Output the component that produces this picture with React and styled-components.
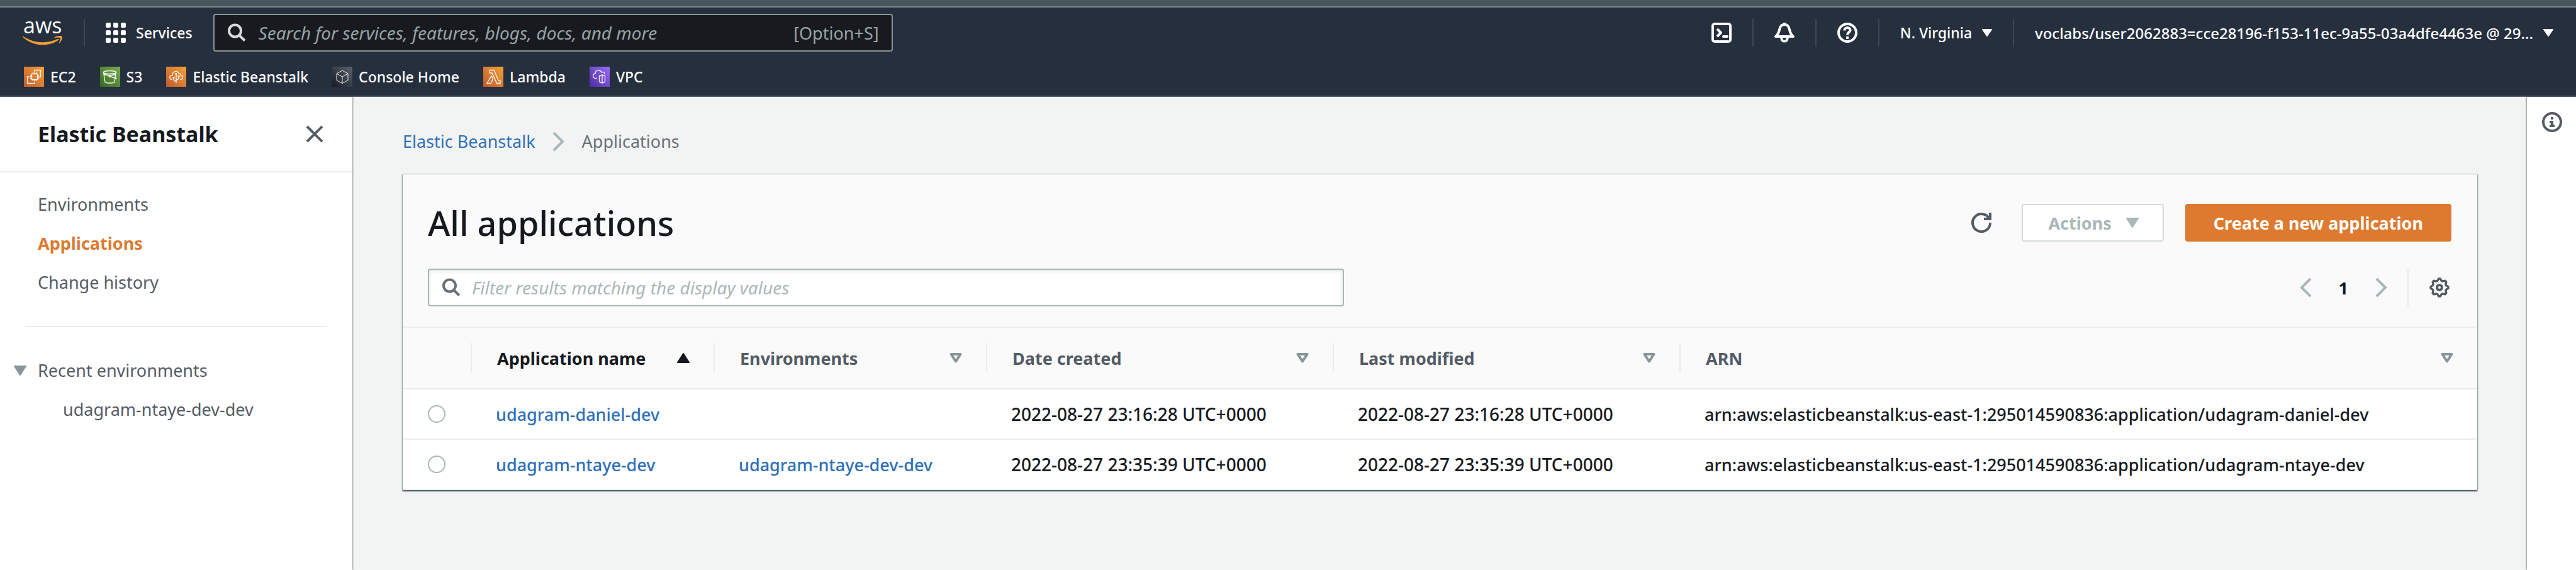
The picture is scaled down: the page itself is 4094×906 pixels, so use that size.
import React from "react";
import styled, { createGlobalStyle } from "styled-components";

const color = {
  navy: "#252f3e",
  navyLine: "#555f6b",
  ink: "#16191f",
  text: "#545b64",
  muted: "#687078",
  soft: "#879596",
  faint: "#aab7b8",
  line: "#eaeded",
  orange: "#dd7a30",
  blue: "#2e70b8",
  page: "#f2f4f4",
};

const GlobalStyle = createGlobalStyle`
  *, *::before, *::after { box-sizing: border-box; }
  body {
    margin: 0;
    background: ${color.page};
    color: ${color.ink};
    font-family: "Noto Sans", "Open Sans", sans-serif;
    font-size: 27px;
  }
  button, input { font: inherit; color: inherit; }
  button { background: none; border: 0; padding: 0; cursor: pointer; }
  a { text-decoration: none; color: inherit; }
  ul, ol { list-style: none; margin: 0; padding: 0; }
  svg { display: block; flex: none; }
`;

const Page = styled.div`
  min-height: 100vh;
  display: flex;
  flex-direction: column;
`;

const BrowserEdge = styled.div`
  height: 12px;
  background: #48565e;
  border-bottom: 2px solid #75838a;
`;

/* ---------- global navigation ---------- */

const GlobalNav = styled.header`
  background: ${color.navy};
  color: #fff;
  border-bottom: 2px solid ${color.navyLine};
  font-size: 23px;
  font-weight: 500;
`;

const NavBar = styled.div`
  display: flex;
  align-items: center;
  height: 80px;
  padding: 0 36px;
`;

const NavDivider = styled.span`
  flex: none;
  width: 2px;
  height: 44px;
  background: #414750;
`;

const LogoLink = styled.a`
  display: block;
  margin-right: 33px;
`;

const ServicesButton = styled.button`
  display: flex;
  align-items: center;
  gap: 16px;
  margin: 0 33px;
  font-weight: 500;
`;

const GlobalSearch = styled.label`
  display: flex;
  align-items: center;
  gap: 20px;
  flex: 0 1 1080px;
  height: 60px;
  padding: 0 20px;
  border: 2px solid ${color.soft};
  border-radius: 4px;
  background: #191a1f;
  color: #d5dbdb;
  font-size: 28px;
  font-weight: 400;
`;

const SearchInput = styled.input`
  flex: 1;
  min-width: 0;
  padding: 0;
  border: 0;
  outline: 0;
  background: transparent;
  &::placeholder {
    color: ${(p) => p.$hint};
    font-style: italic;
    opacity: 1;
  }
`;

const Shortcut = styled.span`
  color: #95a5a6;
  font-size: 27px;
`;

const NavTools = styled.div`
  display: flex;
  align-items: center;
  gap: 33px;
  margin-left: auto;
`;

const NavMenuButton = styled.button`
  display: flex;
  align-items: center;
  gap: 16px;
  font-weight: 500;
  font-size: ${(p) => (p.$account ? "24px" : "23px")};
  white-space: nowrap;
`;

const Favorites = styled.ul`
  display: flex;
  align-items: center;
  gap: 38px;
  height: 60px;
  padding: 0 38px;
`;

const FavoriteLink = styled.a`
  display: flex;
  align-items: center;
  gap: 10px;
  white-space: nowrap;
`;

/* ---------- page frame ---------- */

const Body = styled.div`
  flex: 1;
  display: flex;
`;

const Sidebar = styled.aside`
  flex: none;
  width: 560px;
  background: #fff;
  box-shadow: 1px 0 2px rgba(0, 28, 36, 0.45);
`;

const SidebarHeader = styled.div`
  display: flex;
  align-items: center;
  justify-content: space-between;
  height: 120px;
  padding: 0 46px 0 60px;
  border-bottom: 2px solid ${color.line};
`;

const SidebarTitle = styled.a`
  color: ${color.ink};
  font-size: 34px;
  font-weight: 700;
`;

const IconButton = styled.button`
  display: flex;
  color: ${(p) => p.$tone || color.text};
`;

const SideList = styled.ul`
  padding: ${(p) => (p.$nested ? "0 0 0 40px" : "20px 0 0")};
`;

const SideLink = styled.a`
  display: block;
  padding-left: 60px;
  line-height: 62px;
  color: ${(p) => (p.$active ? color.orange : color.text)};
  font-weight: ${(p) => (p.$active ? 700 : 400)};
`;

const SideRule = styled.hr`
  height: 2px;
  margin: 38px 40px;
  border: 0;
  background: ${color.line};
`;

const SideToggle = styled.button`
  display: flex;
  align-items: center;
  gap: 18px;
  padding-left: 22px;
  line-height: 62px;
  color: ${color.text};
`;

const Main = styled.main`
  flex: 1;
  min-width: 0;
  padding: 40px 79px 0 80px;
`;

const HelpPanel = styled.aside`
  flex: none;
  width: 78px;
  padding: 24px 22px 0 24px;
  background: #fff;
  box-shadow: -1px 0 2px rgba(0, 28, 36, 0.45);
`;

const Breadcrumbs = styled.ol`
  display: flex;
  align-items: center;
  gap: 27px;
  line-height: 62px;
  margin-bottom: 20px;
`;

const Crumb = styled.li`
  display: flex;
  align-items: center;
  gap: 27px;
  color: ${color.muted};
`;

const TextLink = styled.a`
  color: ${color.blue};
`;

/* ---------- applications card ---------- */

const Card = styled.section`
  background: #fff;
  border-top: 2px solid ${color.line};
  box-shadow: 0 2px 2px rgba(0, 28, 36, 0.5), 1px 1px 2px rgba(0, 28, 36, 0.3),
    -1px 1px 2px rgba(0, 28, 36, 0.3);
`;

const CardHeader = styled.div`
  display: flex;
  flex-direction: column;
  gap: 43px;
  padding: 46px 41px 32px 40px;
  background: #fafafa;
  border-bottom: 2px solid ${color.line};
`;

const CardRow = styled.div`
  display: flex;
  align-items: center;
  justify-content: space-between;
  height: 60px;
`;

const CardTitle = styled.h1`
  margin: 0;
  font-size: 54px;
  line-height: 60px;
  font-weight: 500;
`;

const ButtonGroup = styled.div`
  display: flex;
  align-items: center;
  gap: 34px;
`;

const RefreshButton = styled(IconButton)`
  margin-right: 14px;
`;

const ActionsButton = styled.button`
  display: flex;
  align-items: center;
  gap: 23px;
  height: 60px;
  padding: 0 38px 0 40px;
  border: 2px solid #d5dbdb;
  border-radius: 4px;
  background: #fff;
  color: ${color.faint};
  font-weight: 700;
`;

const PrimaryButton = styled.button`
  height: 60px;
  padding: 0 45px;
  border-radius: 4px;
  background: ${color.orange};
  color: #fff;
  font-weight: 700;
`;

const FilterBox = styled.label`
  display: flex;
  align-items: center;
  gap: 18px;
  flex: 0 1 1456px;
  height: 60px;
  padding: 0 20px;
  border: 2px solid ${color.faint};
  border-radius: 4px;
  background: #fff;
  box-shadow: inset 0 2px 6px rgba(0, 28, 36, 0.12);
  color: ${color.muted};
  font-size: 28px;
`;

const Pager = styled.nav`
  display: flex;
  align-items: center;
  gap: 43px;
  padding-right: 3px;
`;

const PageNumber = styled.button`
  font-weight: 700;
`;

const PagerSettings = styled.div`
  display: flex;
  align-items: center;
  height: 60px;
  padding-left: 33px;
  border-left: 2px solid ${color.line};
  margin-left: -12px;
`;

const Table = styled.table`
  width: 100%;
  table-layout: fixed;
  border-collapse: separate;
  border-spacing: 0;
`;

const Column = styled.col`
  width: ${(p) => (p.$width ? `${p.$width}px` : "auto")};
`;

const HeadCell = styled.th`
  height: 98px;
  padding: 0;
  background: #fafafa;
  border-bottom: 2px solid ${color.line};
  text-align: left;
`;

const HeadInner = styled.div`
  height: 48px;
  border-right: ${(p) => (p.$last ? "0" : `2px solid ${color.line}`)};
`;

const SortButton = styled.button`
  display: flex;
  align-items: center;
  justify-content: space-between;
  width: 100%;
  height: 48px;
  padding: 0 38px 0 40px;
  color: ${(p) => (p.$sorted ? color.ink : color.text)};
  font-weight: 700;
  white-space: nowrap;
`;

const Cell = styled.td`
  height: 80px;
  padding: 0 0 0 ${(p) => (p.$select ? "40px" : "38px")};
  border-bottom: 2px solid ${color.line};
  font-size: ${(p) => (p.$date ? "28px" : "27px")};
  font-weight: 500;
  white-space: nowrap;
`;

const Radio = styled.input`
  display: block;
  appearance: none;
  width: 28px;
  height: 28px;
  margin: 0;
  border: 2px solid ${color.faint};
  border-radius: 50%;
  background: #fff;
`;

/* ---------- icons ---------- */

const AwsLogo = () => (
  <svg width="64" height="72" viewBox="0 -17 64 72" role="img" aria-label="AWS">
    <text x="1" y="20" fontSize="34" fontWeight="400" fontFamily="Open Sans, Noto Sans, sans-serif" fill="#fff">
      aws
    </text>
    <path d="M0.6 24.6c9 6.200 19.400 9.600 30.600 9.600 9 0 17.600-2 25-5.400 1.300-.6 2 .8 1 1.700C50.500 35.600 41.600 38.300 32 38.300 19.800 38.300 8.600 33.600.3 25.900c-.8-.8-.4-1.800.3-1.300z" fill="#f29d38" />
    <path d="M50.500 26.300c3.500-2.600 10-3 12-1.500 1.300 1.300-.4 7.600-3.700 10.600-.6.400-1 .1-.8-.5.900-2.300 2.400-6.500 1.700-7.600-.7-1-5.200-.6-8.400-.3-.9 0-1.200-.3-.8-.7z" fill="#f29d38" />
  </svg>
);

const GridIcon = () => (
  <svg width="32" height="32" viewBox="0 0 32 32" fill="currentColor" aria-hidden="true">
    {[0, 12, 24].map((y) => [0, 12, 24].map((x) => <rect key={`${x}-${y}`} x={x} y={y} width="8" height="8" rx="2" />))}
  </svg>
);

const SearchIcon = () => (
  <svg width="30" height="30" viewBox="0 0 30 30" fill="none" stroke="currentColor" strokeWidth="4" aria-hidden="true">
    <circle cx="12.500" cy="12" r="9.500" />
    <path d="M19 19l9 8.500" />
  </svg>
);

const Outline = ({ children }) => (
  <svg width="32" height="32" viewBox="0 0 16 16" fill="none" stroke="currentColor" strokeWidth="2" strokeLinejoin="round" aria-hidden="true">
    {children}
  </svg>
);

const TerminalIcon = () => (
  <Outline>
    <rect x="1" y="1" width="14" height="14" rx="1.500" />
    <path d="M4.500 5l3 3-3 3" />
    <path d="M9.500 11h3" strokeLinecap="round" />
  </Outline>
);

const BellIcon = () => (
  <Outline>
    <path d="M8 0v1.500M1 11h14c-2-1.500-2.500-3-3-5.500-.5-2.600-2-4-4-4s-3.500 1.400-4 4C3.500 8 3 9.500 1 11z" />
    <path d="M5.700 11.500v1a2.300 2.300 0 0 0 4.600 0v-1" />
  </Outline>
);

const HelpIcon = () => (
  <Outline>
    <circle cx="8" cy="8" r="7" />
    <path d="M5.700 6.200C5.700 4.800 6.700 4 8 4s2.300.8 2.300 2c0 1.600-2.300 1.600-2.300 3.800M8 11v2" />
  </Outline>
);

const InfoIcon = () => (
  <Outline>
    <circle cx="8" cy="8" r="7" />
    <path d="M8 4v2M6 8h2v4M6 11h4" strokeLinejoin="miter" />
  </Outline>
);

const RefreshIcon = () => (
  <Outline>
    <path d="M10 5h5V0" strokeLinejoin="miter" />
    <path d="M15 8a7 7 0 1 1-.7-3" />
  </Outline>
);

const gearPath = Array.from({ length: 32 }, (_, i) => {
  const radius = i % 4 < 2 ? 7 : 5.6;
  const angle = ((i - 0.5) * Math.PI) / 16;
  return `${i ? "L" : "M"}${(8 + radius * Math.sin(angle)).toFixed(2)} ${(8 - radius * Math.cos(angle)).toFixed(2)}`;
}).join("");

const GearIcon = () => (
  <Outline>
    <path d={`${gearPath}z`} strokeWidth="1.700" />
    <circle cx="8" cy="8" r="2" />
  </Outline>
);

const CloseIcon = () => (
  <svg width="28" height="28" viewBox="0 0 28 28" fill="none" stroke="currentColor" strokeWidth="4" aria-hidden="true">
    <path d="M2 2l24 24M26 2L2 26" />
  </svg>
);

const Chevron = ({ left }) => (
  <svg width="20" height="32" viewBox="0 0 20 32" fill="none" stroke={color.faint} strokeWidth="4" aria-hidden="true">
    <path d={left ? "M18 2L4 16l14 14" : "M2 2l14 14L2 30"} />
  </svg>
);

const Triangle = ({ fill, small }) => (
  <svg width={small ? 16 : 20} height={small ? 12 : 16} viewBox="0 0 20 16" preserveAspectRatio="none" fill={fill} stroke={fill} strokeWidth="2" strokeLinejoin="round" aria-hidden="true">
    <path d="M1 1h18l-9 14z" />
  </svg>
);

const SortIcon = ({ ascending }) => (
  <svg width="20" height="16" viewBox="0 0 20 16" strokeLinejoin="round" aria-hidden="true">
    {ascending ? (
      <path d="M10 1l9 14H1z" fill={color.ink} stroke={color.ink} strokeWidth="2" />
    ) : (
      <path d="M2.500 2h15L10 13.500z" fill="none" stroke={color.soft} strokeWidth="4" />
    )}
  </svg>
);

const tileColors = {
  orange: ["#c25b2f", "#f3a036"],
  green: ["#356820", "#79ab4d"],
  slate: ["#171c22", "#5b626c"],
  purple: ["#4c2ca0", "#9a6cf8"],
};

const glyphs = {
  ec2: (
    <>
      <rect x="12.500" y="11.500" width="9" height="9" />
      <path d="M14.500 9v2.500M17 9v2.500M19.500 9v2.500M14.500 20.500V23M17 20.500V23M19.500 20.500V23M10 13.500h2.500M10 16h2.500M10 18.500h2.500M21.500 13.500H24M21.500 16H24M21.500 18.500H24" />
      <path d="M17 8V5.500h9.500V16.500H24M9 16H5.500v10.500H17V24" />
    </>
  ),
  s3: (
    <>
      <ellipse cx="15.500" cy="9" rx="10" ry="2.500" />
      <path d="M5.500 9L8 24.500c1.500 2 13.500 2 15 0L25.500 9M6 12c4 2 15 2 19 0" />
      <path d="M16 15.500l10.500 3.500-2-1.500" />
      <circle cx="15" cy="15" r="1" />
    </>
  ),
  beanstalk: (
    <>
      <path d="M10 20.500c-5.500 0-5.500-7 0-7 0-6 8-8.500 10-3 2-.5 3 1 3 3 4 0 4.500 7-.5 7" />
      <path d="M16 12.500V26M16 23c-3 0-4-1.500-4-4M16 21c3 0 4-1.500 4-4" />
      <circle cx="16" cy="11.500" r="1" />
      <circle cx="12" cy="17.500" r="1" />
      <circle cx="20" cy="15.500" r="1" />
    </>
  ),
  home: <path d="M16 6l9 5v10.500L16 26.500 7 21.500V11zM7 11l9 5 9-5M16 16v10.500" />,
  lambda: <path d="M10 5.500h7l7.500 17H27v4h-5.500L14 10h-4zM13 14.500l2.500 5-3.500 7H6z" />,
  vpc: (
    <>
      <path d="M12 18.500H9c-5-1-4-7.500 0-7.500 0-6 8-7 10-2 3-1.500 5 0 5 3" />
      <path d="M20 13l4.500 1.500v8c0 2-2 3-4.500 3.500-2.500-.5-4.500-1.500-4.500-3.500v-8zM20 13v13" />
    </>
  ),
};

const ServiceTile = ({ tone, glyph }) => (
  <svg width="32" height="32" viewBox="0 0 32 32" aria-hidden="true">
    <defs>
      <linearGradient id={`tile-${glyph}`} x1="0" y1="1" x2="1" y2="0">
        <stop offset="0" stopColor={tileColors[tone][0]} />
        <stop offset="1" stopColor={tileColors[tone][1]} />
      </linearGradient>
    </defs>
    <rect width="32" height="32" fill={`url(#tile-${glyph})`} />
    <g fill="none" stroke="#fff" strokeWidth={glyph === "home" ? 1 : 1.4} strokeOpacity="0.9">
      {glyphs[glyph]}
    </g>
  </svg>
);

/* ---------- data ---------- */

const favorites = [
  { label: "EC2", tone: "orange", glyph: "ec2" },
  { label: "S3", tone: "green", glyph: "s3" },
  { label: "Elastic Beanstalk", tone: "orange", glyph: "beanstalk" },
  { label: "Console Home", tone: "slate", glyph: "home" },
  { label: "Lambda", tone: "orange", glyph: "lambda" },
  { label: "VPC", tone: "purple", glyph: "vpc" },
];

const columns = [
  { label: "Application name", width: 386, sorted: true },
  { label: "Environments", width: 433 },
  { label: "Date created", width: 551 },
  { label: "Last modified", width: 551 },
  { label: "ARN" },
];

const applications = [
  {
    name: "udagram-daniel-dev",
    environment: "",
    created: "2022-08-27 23:16:28 UTC+0000",
    modified: "2022-08-27 23:16:28 UTC+0000",
    arn: "arn:aws:elasticbeanstalk:us-east-1:295014590836:application/udagram-daniel-dev",
  },
  {
    name: "udagram-ntaye-dev",
    environment: "udagram-ntaye-dev-dev",
    created: "2022-08-27 23:35:39 UTC+0000",
    modified: "2022-08-27 23:35:39 UTC+0000",
    arn: "arn:aws:elasticbeanstalk:us-east-1:295014590836:application/udagram-ntaye-dev",
  },
];

/* ---------- sections ---------- */

const TopNavigation = () => (
  <GlobalNav>
    <NavBar>
      <LogoLink href="#"><AwsLogo /></LogoLink>
      <NavDivider />
      <ServicesButton type="button"><GridIcon />Services</ServicesButton>
      <GlobalSearch>
        <SearchIcon />
        <SearchInput $hint="#95a5a6" type="text" aria-label="Search" placeholder="Search for services, features, blogs, docs, and more" />
        <Shortcut>[Option+S]</Shortcut>
      </GlobalSearch>
      <NavTools>
        <IconButton $tone="#fff" type="button" aria-label="CloudShell"><TerminalIcon /></IconButton>
        <NavDivider />
        <IconButton $tone="#fff" type="button" aria-label="Notifications"><BellIcon /></IconButton>
        <NavDivider />
        <IconButton $tone="#fff" type="button" aria-label="Support"><HelpIcon /></IconButton>
        <NavDivider />
        <NavMenuButton type="button">N. Virginia<Triangle small fill="#fff" /></NavMenuButton>
        <NavDivider />
        <NavMenuButton $account type="button">
          voclabs/user2062883=cce28196-f153-11ec-9a55-03a4dfe4463e @ 29...<Triangle small fill="#fff" />
        </NavMenuButton>
      </NavTools>
    </NavBar>
    <Favorites>
      {favorites.map((f) => (
        <li key={f.label}>
          <FavoriteLink href="#"><ServiceTile tone={f.tone} glyph={f.glyph} />{f.label}</FavoriteLink>
        </li>
      ))}
    </Favorites>
  </GlobalNav>
);

const SideNavigation = () => (
  <Sidebar>
    <SidebarHeader>
      <SidebarTitle href="#">Elastic Beanstalk</SidebarTitle>
      <IconButton type="button" aria-label="Close navigation"><CloseIcon /></IconButton>
    </SidebarHeader>
    <SideList>
      <li><SideLink href="#">Environments</SideLink></li>
      <li><SideLink href="#" $active>Applications</SideLink></li>
      <li><SideLink href="#">Change history</SideLink></li>
    </SideList>
    <SideRule />
    <SideToggle type="button" aria-expanded="true"><Triangle fill={color.soft} />Recent environments</SideToggle>
    <SideList $nested>
      <li><SideLink href="#">udagram-ntaye-dev-dev</SideLink></li>
    </SideList>
  </Sidebar>
);

const ApplicationsTable = () => (
  <Table>
    <colgroup>
      <Column $width={110} />
      {columns.map((c) => <Column key={c.label} $width={c.width} />)}
    </colgroup>
    <thead>
      <tr>
        <HeadCell aria-label="Selection"><HeadInner /></HeadCell>
        {columns.map((c, i) => (
          <HeadCell key={c.label} scope="col">
            <HeadInner $last={i === columns.length - 1}>
              <SortButton type="button" $sorted={c.sorted}>{c.label}<SortIcon ascending={c.sorted} /></SortButton>
            </HeadInner>
          </HeadCell>
        ))}
      </tr>
    </thead>
    <tbody>
      {applications.map((a) => (
        <tr key={a.name}>
          <Cell $select><Radio type="radio" name="application" aria-label={a.name} /></Cell>
          <Cell><TextLink href="#">{a.name}</TextLink></Cell>
          <Cell>{a.environment && <TextLink href="#">{a.environment}</TextLink>}</Cell>
          <Cell $date>{a.created}</Cell>
          <Cell $date>{a.modified}</Cell>
          <Cell>{a.arn}</Cell>
        </tr>
      ))}
    </tbody>
  </Table>
);

export default function App() {
  return (
    <Page>
      <GlobalStyle />
      <BrowserEdge />
      <TopNavigation />
      <Body>
        <SideNavigation />
        <Main>
          <Breadcrumbs>
            <Crumb><TextLink href="#">Elastic Beanstalk</TextLink><Chevron /></Crumb>
            <Crumb>Applications</Crumb>
          </Breadcrumbs>
          <Card>
            <CardHeader>
              <CardRow>
                <CardTitle>All applications</CardTitle>
                <ButtonGroup>
                  <RefreshButton type="button" aria-label="Refresh"><RefreshIcon /></RefreshButton>
                  <ActionsButton type="button">Actions<Triangle fill={color.faint} /></ActionsButton>
                  <PrimaryButton type="button">Create a new application</PrimaryButton>
                </ButtonGroup>
              </CardRow>
              <CardRow>
                <FilterBox>
                  <SearchIcon />
                  <SearchInput $hint={color.faint} type="text" aria-label="Filter results" placeholder="Filter results matching the display values" />
                </FilterBox>
                <Pager aria-label="Pagination">
                  <IconButton type="button" aria-label="Previous page"><Chevron left /></IconButton>
                  <PageNumber type="button">1</PageNumber>
                  <IconButton type="button" aria-label="Next page"><Chevron /></IconButton>
                  <PagerSettings>
                    <IconButton type="button" aria-label="Preferences"><GearIcon /></IconButton>
                  </PagerSettings>
                </Pager>
              </CardRow>
            </CardHeader>
            <ApplicationsTable />
          </Card>
        </Main>
        <HelpPanel>
          <IconButton type="button" aria-label="Info"><InfoIcon /></IconButton>
        </HelpPanel>
      </Body>
    </Page>
  );
}
